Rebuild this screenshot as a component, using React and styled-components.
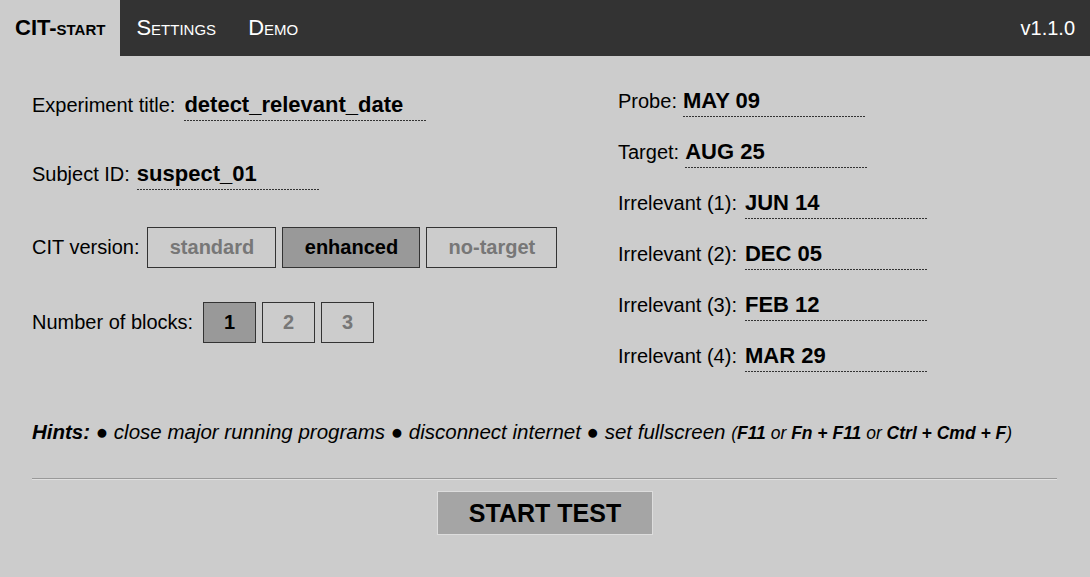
import React, { useState } from 'react';
import styled, { createGlobalStyle } from 'styled-components';

const GlobalStyle = createGlobalStyle`
    html, body {
        margin: 0;
        padding: 0;
        background: #cccccc;
        font-family: "Liberation Sans", Arial, sans-serif;
        color: #000;
    }
    * { box-sizing: border-box; }
`;

const NavBar = styled.nav`
    display: flex;
    align-items: stretch;
    height: 56px;
    background: #333333;
`;

const NavTab = styled.div`
    display: flex;
    align-items: center;
    font-size: 22px;
    font-variant: small-caps;
    font-weight: ${props => props.$active ? 700 : 400};
    color: ${props => props.$active ? '#000' : '#fff'};
    background: ${props => props.$active ? '#cccccc' : 'transparent'};
    padding: 0 ${props => props.$active ? 15 : 16}px;
    cursor: pointer;
`;

const Version = styled.div`
    margin-left: auto;
    display: flex;
    align-items: center;
    padding-right: 15px;
    font-size: 20px;
    color: #fff;
`;

const Main = styled.main`
    padding: 24px 33px 0 32px;
`;

const Columns = styled.div`
    display: grid;
    grid-template-columns: 586px 1fr;
`;

const LeftColumn = styled.div`
    display: flex;
    flex-direction: column;
`;

const RightColumn = styled.div`
    display: flex;
    flex-direction: column;
    margin-top: -4px;
`;

const Row = styled.div`
    display: flex;
    align-items: baseline;
    height: ${props => props.$height || 52}px;
    margin-top: ${props => props.$top || 0}px;
    padding-top: 12px;
    font-size: 20px;
`;

const ButtonRow = styled.div`
    display: flex;
    align-items: center;
    gap: 6px;
    height: 52px;
    margin-top: ${props => props.$top || 0}px;
    font-size: 20px;
`;

const Label = styled.span`
    margin-right: ${props => props.$gap ?? 7}px;
    white-space: nowrap;
`;

const ValueInput = styled.input`
    width: ${props => props.$width || 182}px;
    border: none;
    outline: none;
    background: transparent repeating-linear-gradient(to right, #333 0 2px, transparent 2px 3px) left bottom / 100% 1px no-repeat;
    font-family: inherit;
    font-size: 22px;
    font-weight: 700;
    color: #000;
    padding: 0 0 3px 0;
    margin: 0;
`;

const OptionButton = styled.button`
    height: 41px;
    width: ${props => props.$w}px;
    padding: 0;
    border: 1px solid #333;
    background: ${props => props.$selected ? '#999999' : '#cccccc'};
    color: ${props => props.$selected ? '#000' : '#777'};
    font-family: inherit;
    font-size: 20px;
    font-weight: 700;
    cursor: pointer;
`;

const Hints = styled.p`
    margin: 38px 0 0 0;
    font-size: 20.5px;
    font-style: italic;
    line-height: 24px;
`;

const Keys = styled.span`
    font-size: 17.5px;
`;

const Divider = styled.hr`
    margin: 33px 0 0 0;
    border: none;
    border-top: 1px solid #999;
    border-bottom: 1px solid #e0e0e0;
`;

const StartRow = styled.div`
    display: flex;
    justify-content: center;
    padding-top: 11px;
    padding-left: 1px;
`;

const StartButton = styled.button`
    width: 216px;
    height: 44px;
    background: #a5a5a5;
    border: 1px solid #dddddd;
    font-family: inherit;
    font-size: 25px;
    font-weight: 700;
    color: #000;
    cursor: pointer;
`;

const versions = [
    { key: 'standard', w: 129 },
    { key: 'enhanced', w: 138 },
    { key: 'no-target', w: 131 },
];

const items = [
    ['Probe', 'MAY 09'],
    ['Target', 'AUG 25'],
    ['Irrelevant (1)', 'JUN 14'],
    ['Irrelevant (2)', 'DEC 05'],
    ['Irrelevant (3)', 'FEB 12'],
    ['Irrelevant (4)', 'MAR 29'],
];

export default function App() {
    const [version, setVersion] = useState('enhanced');
    const [blocks, setBlocks] = useState(1);
    return (
        <>
            <GlobalStyle />
            <NavBar>
                <NavTab $active>CIT-start</NavTab>
                <NavTab>Settings</NavTab>
                <NavTab>Demo</NavTab>
                <Version>v1.1.0</Version>
            </NavBar>
            <Main>
                <Columns>
                    <LeftColumn>
                        <Row>
                            <Label $gap={9}>Experiment title:</Label>
                            <ValueInput $width={243} defaultValue="detect_relevant_date" />
                        </Row>
                        <Row $top={17}>
                            <Label>Subject ID:</Label>
                            <ValueInput $width={183} defaultValue="suspect_01" />
                        </Row>
                        <ButtonRow $top={20}>
                            <Label $gap={2}>CIT version:</Label>
                            {versions.map(v => (
                                <OptionButton key={v.key} $w={v.w} $selected={version === v.key} onClick={() => setVersion(v.key)}>
                                    {v.key}
                                </OptionButton>
                            ))}
                        </ButtonRow>
                        <ButtonRow $top={23}>
                            <Label $gap={4}>Number of blocks:</Label>
                            {[1, 2, 3].map(n => (
                                <OptionButton key={n} $w={53} $selected={blocks === n} onClick={() => setBlocks(n)}>
                                    {n}
                                </OptionButton>
                            ))}
                        </ButtonRow>
                    </LeftColumn>
                    <RightColumn>
                        {items.map(([label, value]) => (
                            <Row key={label} $height={51}>
                                <Label $gap={label.startsWith('Irr') ? 8 : 6}>{label}:</Label>
                                <ValueInput $width={182} defaultValue={value} />
                            </Row>
                        ))}
                    </RightColumn>
                </Columns>
                <Hints>
                    <b>Hints:</b> ● close major running programs ● disconnect internet ● set fullscreen{' '}
                    <Keys>(<b>F11</b> or <b>Fn + F11</b> or <b>Ctrl + Cmd + F</b>)</Keys>
                </Hints>
                <Divider />
                <StartRow>
                    <StartButton>START TEST</StartButton>
                </StartRow>
            </Main>
        </>
    );
}
